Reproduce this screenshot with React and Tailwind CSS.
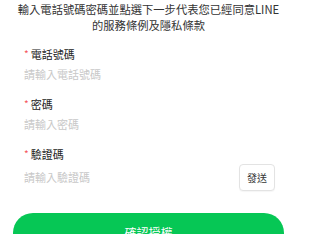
import { useState } from "react";

const font = { fontFamily: '"Noto Sans CJK TC", "Noto Sans", sans-serif' };

const Field = ({ label, placeholder, value, onChange, action }) => (
  <div className="px-6">
    <div className="flex items-center h-4 text-[11px] leading-4 text-[#222]">
      <span className="text-[#f5555b] mr-[2px] text-[10px]">*</span>
      {label}
    </div>
    <div className={`flex items-center ${action ? "h-[30px]" : "h-6"}`}>
      <input
        value={value}
        onChange={(e) => onChange(e.target.value)}
        placeholder={placeholder}
        className="flex-1 min-w-0 bg-transparent text-[11px] text-[#222] placeholder:text-[#c8c8c8] outline-none"
      />
      {action}
    </div>
  </div>
);

export default function App() {
  const [phone, setPhone] = useState("");
  const [pwd, setPwd] = useState("");
  const [code, setCode] = useState("");

  return (
    <div className="w-[297px] h-[234px] overflow-hidden bg-white" style={font}>
      <p className="pt-[1px] text-center text-[11.3px] leading-[16px] text-[#333] whitespace-nowrap">
        輸入電話號碼密碼並點選下一步代表您已經同意LINE
        <br />
        的服務條例及隱私條款
      </p>

      <div className="mt-[13px] flex flex-col gap-[10px]">
        <Field label="電話號碼" placeholder="請輸入電話號碼" value={phone} onChange={setPhone} />
        <Field label="密碼" placeholder="請輸入密碼" value={pwd} onChange={setPwd} />
        <Field
          label="驗證碼"
          placeholder="請輸入驗證碼"
          value={code}
          onChange={setCode}
          action={
            <button className="-mr-[2px] w-9 h-[27px] rounded-[4px] border border-[#e3e3e3] bg-white text-[10px] text-[#333] shadow-[0_1px_1px_rgba(0,0,0,0.04)]">
              發送
            </button>
          }
        />
      </div>

      <div className="mx-[13px] mt-[21px]">
        <button className="w-full h-10 rounded-full bg-[#06c755] text-white text-[12px]">
          確認授權
        </button>
      </div>
    </div>
  );
}
